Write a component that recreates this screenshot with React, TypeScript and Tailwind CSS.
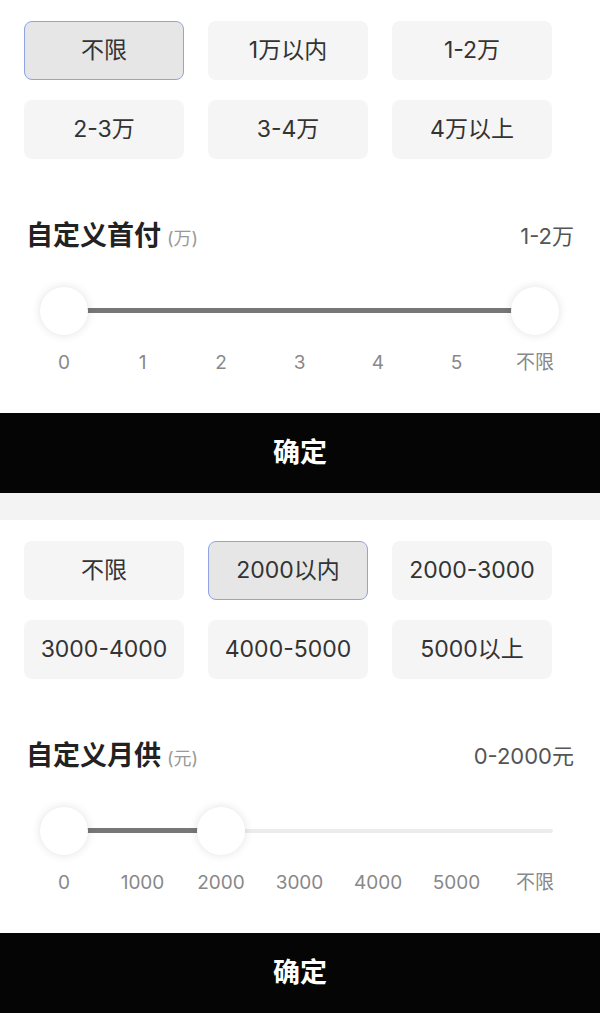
import React from "react";

const font = { fontFamily: 'Inter, "Noto Sans CJK SC", "Noto Sans", sans-serif' };

function Options({ items, selected }: { items: string[]; selected: number }) {
  return (
    <div className="grid grid-cols-3 gap-x-[24px] gap-y-[20px] px-[24px] w-[576px]">
      {items.map((t, i) => (
        <div
          key={t}
          className={
            "h-[59px] rounded-[8px] flex items-center justify-center text-[23px] text-[#333] " +
            (i === selected ? "bg-[#e6e6e6] border border-[#8fa4e0]" : "bg-[#f5f5f5]")
          }
        >
          {t}
        </div>
      ))}
    </div>
  );
}

function Section({
  items,
  selected,
  title,
  unit,
  value,
  labels,
  right,
  fullTrack,
}: {
  items: string[];
  selected: number;
  title: string;
  unit: string;
  value: string;
  labels: string[];
  right: number;
  fullTrack: boolean;
}) {
  const step = 78.5;
  return (
    <div className="bg-white">
      <div className="pt-[21px]">
        <Options items={items} selected={selected} />
      </div>
      <div className="mt-[60px] h-[34px] flex items-center justify-between pl-[26px] pr-[26px]">
        <div className="flex items-baseline">
          <span className="text-[27px] font-bold text-[#222]">{title}</span>
          <span className="text-[18px] text-[#999] ml-[6px]">({unit})</span>
        </div>
        <span className="text-[22px] text-[#555]">{value}</span>
      </div>
      <div className="mt-[34px] ml-[40px] w-[519px] h-[48px] relative">
        {!fullTrack && (
          <div className="absolute left-[24px] right-[6px] top-[22px] h-[4px] bg-[#ececec] rounded-full" />
        )}
        <div
          className="absolute top-[21px] h-[5px] bg-[#777]"
          style={{ left: 24, width: right * step }}
        />
        <div className="absolute left-0 top-0 w-[48px] h-[48px] rounded-full bg-white shadow-[0_0_10px_rgba(0,0,0,0.12)]" />
        <div
          className="absolute top-0 w-[48px] h-[48px] rounded-full bg-white shadow-[0_0_10px_rgba(0,0,0,0.12)]"
          style={{ left: right * step }}
        />
      </div>
      <div className="mt-[16px] ml-[40px] w-[519px] flex justify-between">
        {labels.map((l) => (
          <span key={l} className="w-[48px] text-center text-[19px] leading-[24px] text-[#888] whitespace-nowrap flex justify-center">
            {l}
          </span>
        ))}
      </div>
      <div className="mt-[38px] h-[80px] bg-[#050505] flex items-center justify-center text-white text-[27px] font-bold">
        确定
      </div>
    </div>
  );
}

export default function App() {
  return (
    <div className="w-[600px] h-[1013px] overflow-hidden bg-white" style={font}>
      <Section
        items={["不限", "1万以内", "1-2万", "2-3万", "3-4万", "4万以上"]}
        selected={0}
        title="自定义首付"
        unit="万"
        value="1-2万"
        labels={["0", "1", "2", "3", "4", "5", "不限"]}
        right={6}
        fullTrack={true}
      />
      <div className="h-[27px] bg-[#f3f3f3]" />
      <Section
        items={["不限", "2000以内", "2000-3000", "3000-4000", "4000-5000", "5000以上"]}
        selected={1}
        title="自定义月供"
        unit="元"
        value="0-2000元"
        labels={["0", "1000", "2000", "3000", "4000", "5000", "不限"]}
        right={2}
        fullTrack={false}
      />
    </div>
  );
}
